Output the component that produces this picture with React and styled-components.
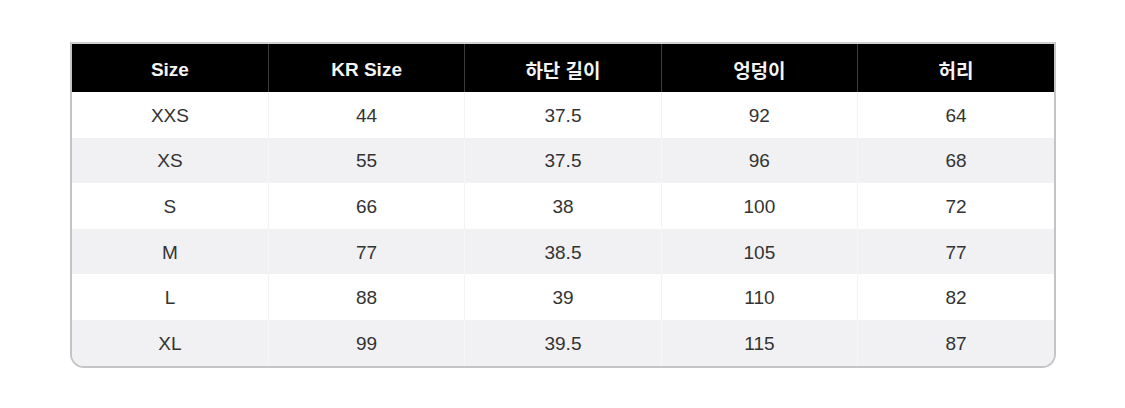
import styled, { createGlobalStyle } from 'styled-components'

const Global = createGlobalStyle`
  html, body {
    margin: 0;
    padding: 0;
    background: #ffffff;
  }
  body {
    font-family: "Liberation Sans", Arial, "Noto Sans CJK KR", sans-serif;
  }
`;

const Page = styled.div`
  width: 1125px;
  height: 408px;
  padding: 42px 0 0 70px;
  box-sizing: border-box;
`;

const Card = styled.div`
  width: 986px;
  border: 2px solid #c4c4c6;
  border-top-color: #d0d0d0;
  border-radius: 0 0 14px 14px;
  overflow: hidden;
  box-sizing: border-box;
`;

const Table = styled.table`
  width: 100%;
  border-collapse: collapse;
  table-layout: fixed;
`;

const Th = styled.th`
  height: 45px;
  padding: 3px 0 0;
  background: #000000;
  color: #f4f4f4;
  font-size: 19px;
  font-weight: bold;
  text-align: center;
  border-left: 1px solid #3a3a3a;
  &:first-child {
    border-left: none;
  }
`;

const Tr = styled.tr`
  background: ${p => (p.$alt ? '#f1f1f3' : '#ffffff')};
`;

const Td = styled.td`
  height: 43.6px;
  padding: 2px 0 0;
  color: #333333;
  font-size: 19px;
  text-align: center;
  border-left: 1px solid ${p => (p.$alt ? '#f6f6f7' : '#f3f3f3')};
  &:first-child {
    border-left: none;
  }
`;

const headers = ['Size', 'KR Size', '하단 길이', '엉덩이', '허리']

const rows = [
  ['XXS', '44', '37.5', '92', '64'],
  ['XS', '55', '37.5', '96', '68'],
  ['S', '66', '38', '100', '72'],
  ['M', '77', '38.5', '105', '77'],
  ['L', '88', '39', '110', '82'],
  ['XL', '99', '39.5', '115', '87'],
]

const App = () => {
  return (
    <Page>
      <Global />
      <Card>
        <Table>
          <thead>
            <tr>
              {headers.map(h => <Th key={h}>{h}</Th>)}
            </tr>
          </thead>
          <tbody>
            {rows.map((r, i) => (
              <Tr key={r[0]} $alt={i % 2 === 1}>
                {r.map((c, j) => <Td key={j} $alt={i % 2 === 1}>{c}</Td>)}
              </Tr>
            ))}
          </tbody>
        </Table>
      </Card>
    </Page>
  )
}

export default App;
